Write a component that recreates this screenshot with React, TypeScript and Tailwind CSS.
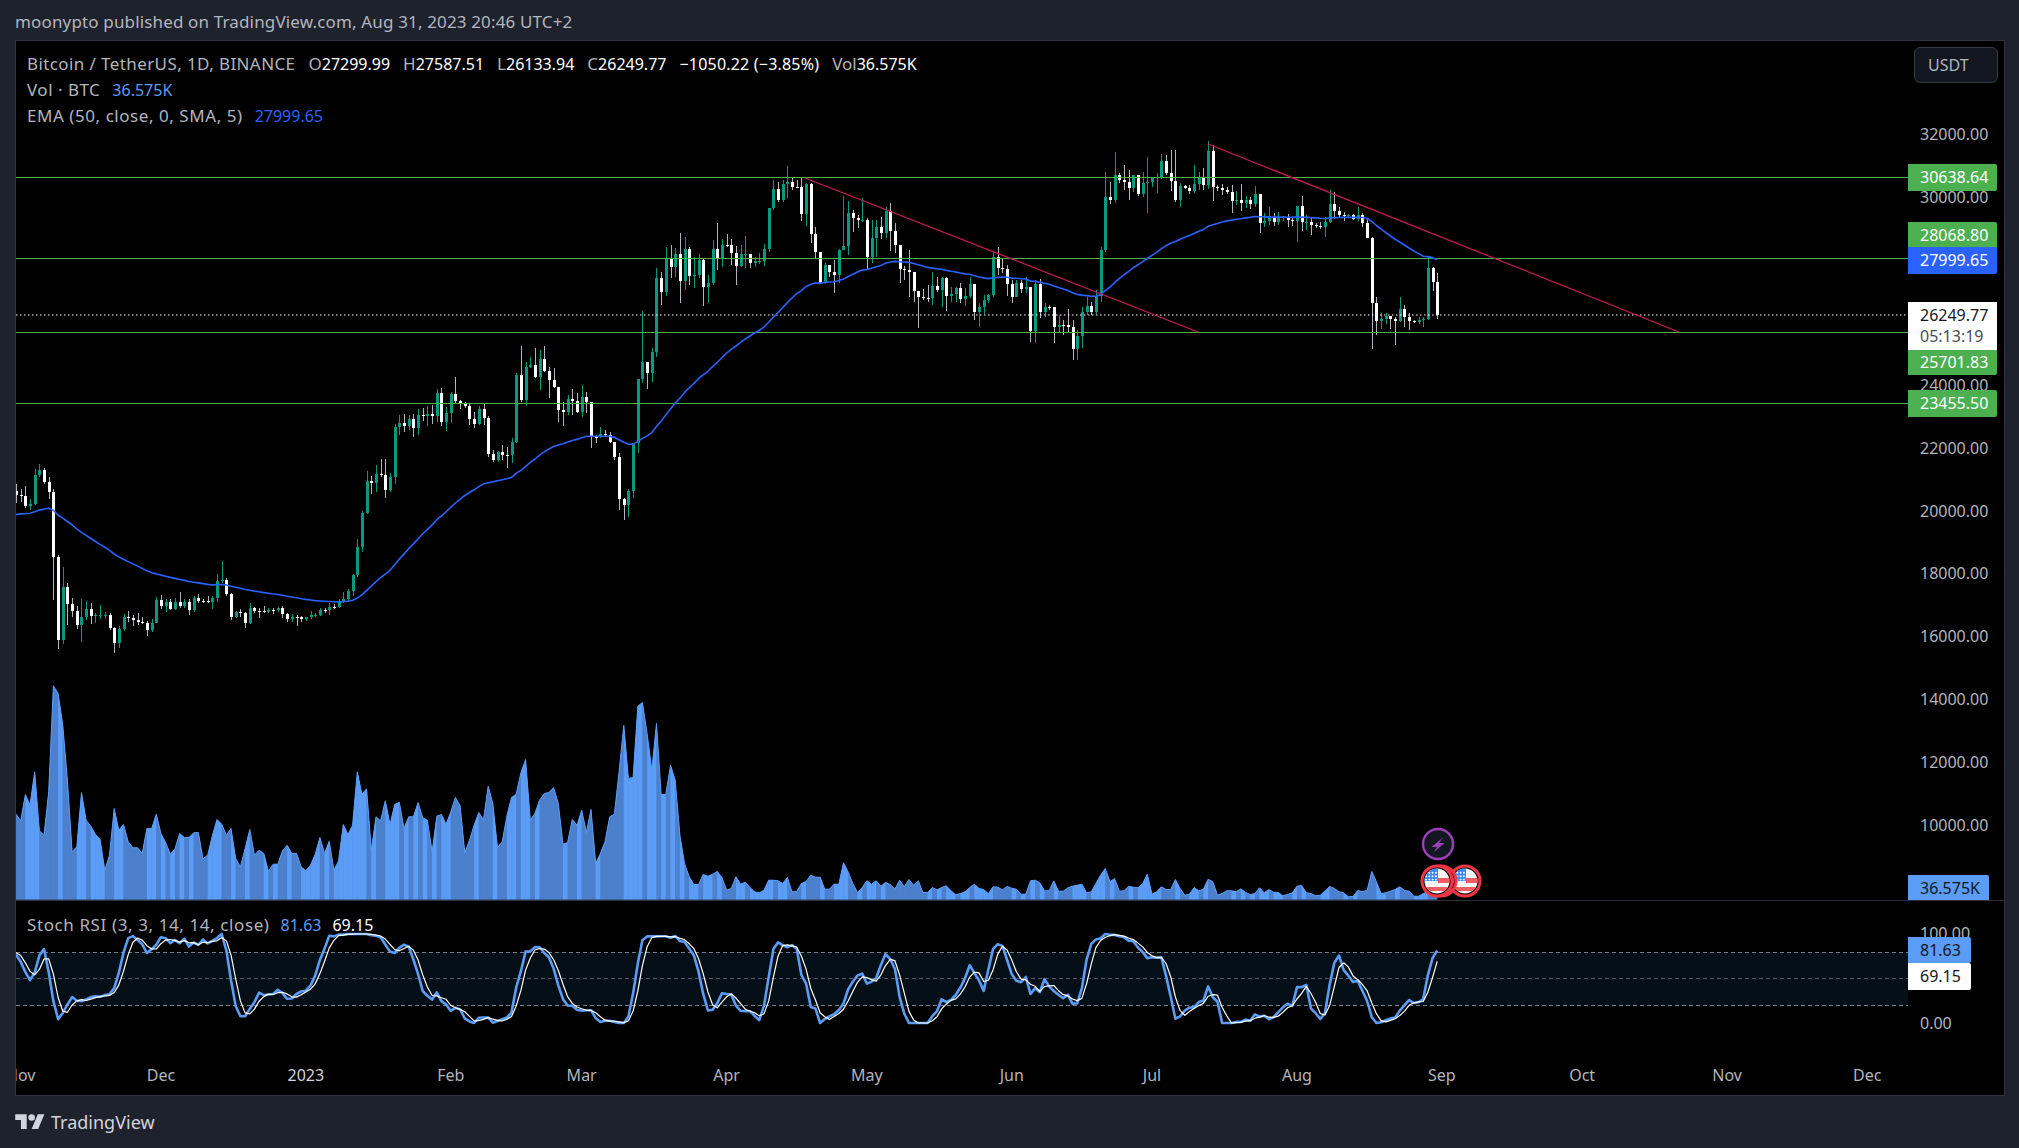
import React from "react";

const pre = [20127,19952,19832,19986,19796,18790,19292,19320,21361,21648,21826,22395,20173,20226,19701,19803,20113,19416,19537,18875,18461,19401,19288,18920,18807,19226,19079,19412,19591,19422,
19312,19056,19629,20337,20158,19955,19531,19417,19439,19131,19060,19155,19375,19176,19068,19262,19549,19327,19123,19041,19164,19204,19570,19329,20080,20771,20295,20591,20818,20635];
const closes = [20490,
20483,20151,20207,21148,21299,20905,20591,18541,15880,17586,17034,16799,16353,16618,16884,16663,16682,16687,16697,16280,15781,16226,16603,16599,16522,16458,16428,16212,16442,17163,
16977,17092,16885,17105,16967,17089,16836,17224,17128,17127,17085,17209,17774,17803,17356,16632,16777,16738,16438,16895,16824,16821,16778,16837,16830,16919,16707,16547,16633,16607,16542,
16616,16672,16674,16850,16831,16950,16943,17127,17178,17440,17944,18846,19930,20954,20871,21185,21134,20677,21071,22667,22783,22707,22917,22632,23060,23009,23074,23022,23743,22827,23125,
23733,23494,23431,23327,22932,22762,23249,22963,21797,21625,21862,21783,21773,22199,24324,23538,24569,24631,24271,24836,24439,24181,23947,23198,23158,23554,23492,23131,
23629,23465,22354,22346,22430,22409,22198,21705,20362,20187,20632,22163,24197,24746,24375,25052,27423,26965,28038,27767,28175,27307,28333,27493,27494,27994,27139,27268,28348,28033,28478,
28473,28199,27811,28169,28175,27907,27948,27961,28333,29653,30235,29884,30399,30485,30318,30315,29445,30397,28822,28245,27262,27816,27591,27510,28300,28422,29473,29340,29248,29268,
28091,28680,29026,28848,29534,28905,28454,27695,27654,27621,26987,26807,26788,26784,27163,27036,27400,26826,26890,27102,26747,26851,27225,26334,26476,26719,26868,28085,27745,27702,27219,
26819,27249,27069,27115,25728,27230,26339,26498,26477,25841,25925,25902,25841,25160,25575,26327,26510,26336,26845,28307,29993,29884,30688,30527,30462,30267,30692,30077,30445,30472,
30585,30617,31156,30767,30514,29895,30346,30292,30171,30414,30620,30380,31454,30312,30289,30231,30145,29856,29913,29792,29908,29771,30081,29176,29228,29354,29212,29314,29352,29275,29230,
29705,29186,29193,29113,29072,29048,29182,29765,29561,29429,29397,29415,29283,29408,29170,28701,26621,26049,26096,26189,26124,26040,26431,26163,26047,26004,26089,26106,27728,27299,26249];

const W1: number[][] = [[132,190],[148,185],[138,205],[178,210],[88,195],[72,110],[85,132],[112,177],[148,480],[345,627],[380,612],[430,555],[473,530],[498,567],[477,605],[483,540],[490,552],[520,550],[495,537],[516,537],[520,570],[560,638],[558,624],[522,572],[513,545],[525,558],[520,555],[530,552],[543,588],[537,575],[472,548],[465,507],[478,516],[478,510],[475,510],[457,505],[478,505],[478,525],[468,517],[462,488],[478,488],[468,488],[468,507],[403,486],[363,430],[415,468],[460,540],[512,535],[508,530],[515,564],[490,552],[500,520],[505,535],[498,520],[505,520],[505,522],[500,516],[497,533],[518,546],[523,545],[525,558],[528,545],[530,544],[513,537],[518,530],[503,529],[505,520],[490,525],[492,506],[478,504],[457,490],[448,482],[403,467],[297,410],[213,335],[93,222],[108,163],[75,157],[57,110],[57,173],[100,155],[-48,132]];
const W2: number[][] = [[695,790],[650,733],[720,748],[725,745],[730,795],[755,805],[738,795],[730,795],[768,890],[870,905],[872,905],[855,900],[860,925],[835,908],[640,850],[558,725],[605,738],[590,625],[565,655],[570,690],[558,635],[620,715],[625,685],[680,785],[725,797],[705,765],[688,765],[700,760],[675,770],[695,760],[725,865],[825,848],[800,835],[810,830],[815,850],[845,900],[880,1050],[1015,1080],[988,1072],[850,1015],[665,880],[452,668],[605,687],[565,665],[325,590],[335,435],[260,408],[255,355],[265,350],[220,430],[232,390],[262,375],[290,385],[283,355],[295,438],[345,430],[240,375],[190,330],[237,320],[222,260],[238,315],[258,375],[255,320],[228,325],[282,325],[290,322],[278,312],[252,318],[145,275],[60,150],[65,125],[60,125],[18,115],[55,90],[60,85],[55,182],[70,198],[70,250],[200,295],[275,370],[310,372],[315,350],[300,398],[268,370],[108,265],[122,285],[150,215],[165,205],[115,185],[175,330],[180,310],[180,290],[172,237],[142,235],[130,272],[190,280],[262,370],[318,360],[270,412],[335,425],[395,505],[388,420],[375,425],[335,435],[350,395],[350,440],[350,452],[380,425],[380,425],[370,430],[385,437],[350,415],[375,480],[430,500],[405,462],[403,430],[275,412],[260,345]];
const W3: number[][] = [[385,430],[405,497],[450,520],[450,500],[450,490],[440,490],[470,635],[450,638],[447,565],[520,560],[525,540],[530,638],[555,610],[570,615],[538,610],[570,690],[600,690],[530,655],[500,555],[515,555],[480,552],[350,515],[125,365],[155,222],[67,220],[130,160],[105,180],[120,210],[138,185],[135,198],[125,200],[82,248],[145,170],[130,188],[72,147],[75,135],[60,183],[60,215],[160,230],[165,178],[165,192],[105,188],[125,180],[115,180],[33,178],[45,212],[165,183],[162,195],[170,193],[165,248],[183,225],[162,242],[197,235],[200,238],[168,232],[195,308],[250,290],[232,285],[250,288],[245,285],[258,272],[252,292],[262,288],[230,335],[198,303],[255,300],[265,315],[280,295],[275,297],[262,322],[180,280],[185,268],[230,265],[245,272],[252,265],[252,270],[232,272],[250,290],[268,325],[320,657],[502,615],[550,597],[550,582],[560,597],[562,645],[502,575],[525,590],[550,600],[570,580],[562,582],[560,590],[380,570],[412,483],[430,567]];

const volA = [432,452,373,405,305,482,495,365,47,70,165,330,545,530,367,450,468,493,508,600,555,415,480,463,515,533,533,550,475,476,432,490,517,552,537,490,502,502,488,487,566,555,497,448,462,495,475,565,590,535,478,555,540,550,603,582,582,542,525,550,550,590,602,585,552,502,550,513,600,572,463,493,465,305,372,356,540,440,452,392,463,403,396,475,440,440,397,443,450,545,438,433,462,425,382,407,548,510,465,427,450,348,400,532,515,437,382,372,308,268,450,430,390,370,367,352,400,522,517,448,465,420,487,418,580,550,515,440,432,305,165,325,322,108,97,190,300,160,373,373,285,330,495,580,620,643,643,613,618,612,604,622,660,655,620,642,636,652,665,668,660,630,630,632,640,622,665,664,640,634,615,621,621,657,657,642,642,578,605,640,667,652,632,642,632,648,637,643,657,630,650,628,645,632,667,667,652,659,652,647,662,674,670,665,652,642,655,658,671,650,651,659,649,654,657,672,672,632,630,638,662,662];
const volB = [122,153,153,143,138,135,132,158,155,130,105,85,125,115,153,152,138,141,143,130,102,162,155,140,148,148,118,145,165,162,142,152,147,117,125,165,160,152,152,155,146,157,163,160,143,158,148,156,157,167,163,158,138,136,158,160,167,165,152,139,145,155,158,170,169,151,154,151,94,125,160,158,153,148,140,151,153,168,168,160,155,165,171];

const X = (i: number) => 16 + 4.675 * i;
const Y = (p: number) => 134 + (32000 - p) * 0.0314;

type Candle = { xc: number; up: boolean; yo: number; yc: number; t: number; b: number };
const candles: Candle[] = closes.map((c, i) => {
  const o = i === 0 ? 20635 : closes[i - 1];
  const yo = Y(o), yc = Y(c);
  let t: number, b: number;
  if (i <= 81) { t = 440 + W1[i][0] / 3; b = 440 + W1[i][1] / 3; }
  else if (i <= 92) { t = Math.min(yo, yc) - 4 - ((i * 7) % 6); b = Math.max(yo, yc) + 4 + ((i * 5) % 7); }
  else if (i <= 210) { t = 160 + W2[i - 93][0] / 3; b = 160 + W2[i - 93][1] / 3; }
  else { t = 130 + W3[i - 211][0] / 3; b = 130 + W3[i - 211][1] / 3; }
  return { xc: Math.round(X(i)), up: c >= o, yo, yc, t, b };
});

// EMA 50
const all = [...pre, ...closes];
const emaRaw: number[] = [];
all.forEach((c, i) => emaRaw.push(i === 0 ? 21300 : emaRaw[i - 1] + (c - emaRaw[i - 1]) * (2 / 51)));
const sma = (a: number[], n: number) =>
  a.map((_, i) => { const s = a.slice(Math.max(0, i - n + 1), i + 1); return s.reduce((x, y) => x + y, 0) / s.length; });
const ema = emaRaw.slice(pre.length);
const emaPts = ema.map((v, i) => `${X(i).toFixed(1)},${Y(v).toFixed(1)}`).join(" ");

// Stoch RSI 3,3,14,14
const rsi: number[] = [];
let ag = 0, al = 0;
all.forEach((c, i) => {
  if (i === 0) { rsi.push(50); return; }
  const d = c - all[i - 1];
  const g = Math.max(d, 0), l = Math.max(-d, 0);
  if (i <= 14) { ag += g / 14; al += l / 14; }
  else { ag = (ag * 13 + g) / 14; al = (al * 13 + l) / 14; }
  rsi.push(al === 0 ? 100 : 100 - 100 / (1 + ag / al));
});
const stoch = rsi.map((r, i) => {
  const s = rsi.slice(Math.max(0, i - 13), i + 1);
  const hi = Math.max(...s), lo = Math.min(...s);
  return hi === lo ? 50 : ((r - lo) / (hi - lo)) * 100;
});
const kAll = sma(stoch, 3);
const dAll = sma(kAll, 3);
const SY = (v: number) => 1023 - 0.89 * v;
const kPts = kAll.slice(pre.length).map((v, i) => `${X(i).toFixed(1)},${SY(v).toFixed(1)}`).join(" ");
const dPts = dAll.slice(pre.length).map((v, i) => `${X(i).toFixed(1)},${SY(v).toFixed(1)}`).join(" ");

// Volume
const BASE = 899.5;
const volY = [...volA.map((y) => BASE - (688 - y) / 3), ...volB.map((y) => BASE - (178 - y) / 3)];
const volTop = volY.map((y, i) => `${X(i).toFixed(1)},${y.toFixed(1)}`).join(" ");
const volArea = `16,${BASE} ${volTop} ${X(volY.length - 1).toFixed(1)},${BASE}`;

function Flag({ cx, cy }: { cx: number; cy: number }) {
  const dots: React.ReactNode[] = [];
  for (let r = 0; r < 3; r++) for (let c = 0; c < 4; c++)
    dots.push(<circle key={`${r}-${c}`} cx={cx - 11 + c * 3.3} cy={cy - 8.2 + r * 3.4} r="0.95" fill="#fff" />);
  return (
    <g>
      <circle cx={cx} cy={cy} r="15" fill="#000" stroke="#f23645" strokeWidth="3" />
      <clipPath id={`fl${cx}`}><circle cx={cx} cy={cy} r="12.5" /></clipPath>
      <g clipPath={`url(#fl${cx})`}>
        <rect x={cx - 13} y={cy - 13} width="26" height="26" fill="#f5f5f5" />
        <rect x={cx + 1} y={cy - 3} width="13" height="5" fill="#f15b62" />
        <rect x={cx - 13} y={cy + 6} width="26" height="4" fill="#f15b62" />
        <rect x={cx - 13} y={cy - 13} width="14" height="13" fill="#3d8bf2" />
        {dots}
      </g>
    </g>
  );
}

const LEVELS = [177, 258, 332, 403];
const AXIS = [
  [32000, 134], [30000, 197], [24000, 385], [22000, 448], [20000, 511], [18000, 573], [16000, 636], [14000, 699], [12000, 762], [10000, 825],
] as const;
const BADGES = [
  ["30638.64", 164, "bg-[#4caf50]"],
  ["28068.80", 222, "bg-[#4caf50]"],
  ["23455.50", 390, "bg-[#4caf50]"],
  ["27999.65", 247, "bg-[#2962ff]"],
] as const;
const TIME: [string, number, boolean][] = [
  ["Nov", 1, false], ["Dec", 31, false], ["2023", 62, true], ["Feb", 93, false], ["Mar", 121, false], ["Apr", 152, false], ["May", 182, false],
  ["Jun", 213, false], ["Jul", 243, false], ["Aug", 274, false], ["Sep", 305, false], ["Oct", 335, false], ["Nov", 366, false], ["Dec", 396, false],
];

export default function App() {
  return (
    <div className="w-[2019px] h-[1148px] flex flex-col bg-[#1e222d] overflow-hidden text-[16px] leading-[26px] text-[#b2b5be] font-['Noto_Sans',sans-serif]">
      <header className="h-[40px] shrink-0 flex items-center pl-[15px] pt-[4px] text-[17px] tracking-[0.15px] text-[#b2b5be]">
        moonypto published on TradingView.com, Aug 31, 2023 20:46 UTC+2
      </header>
      <main className="w-[1990px] ml-[15px] h-[1056px] shrink-0 border border-[#2f3440] bg-black flex flex-col">
        <section className="flex h-[860px] shrink-0 border-b border-[#2a2e39]">
          <div className="relative w-[1892px] h-[859px] overflow-hidden">
            <svg width="1892" height="859" viewBox="16 41 1892 859" className="block">
              <polygon points={volArea} fill="#5088dc" />
              {volY.map((y, i) =>
                i === 0 ? null : (
                  <polygon
                    key={i}
                    points={`${X(i - 1)},${BASE} ${X(i - 1)},${volY[i - 1]} ${X(i)},${y} ${X(i)},${BASE}`}
                    fill={candles[i].up ? "#5b9cf6" : "#4c80cc"}
                  />
                )
              )}
              <polyline points={volTop} fill="none" stroke="#5b9cf6" strokeWidth="1" />
              <g shapeRendering="crispEdges">
                {candles.map((c, i) => (
                  <rect key={i} x={c.xc} y={c.t} width="1" height={c.b - c.t} fill={c.up ? "#089981" : "#b2b5be"} />
                ))}
                {candles.map((c, i) => (
                  <rect
                    key={i}
                    x={c.xc - 1}
                    y={Math.min(c.yo, c.yc)}
                    width="3"
                    height={Math.max(1, Math.abs(c.yo - c.yc))}
                    fill={c.up ? "#089981" : "#ffffff"}
                  />
                ))}
                {LEVELS.map((y) => (
                  <rect key={y} x="16" y={y} width="1892" height="1" fill="#4caf50" />
                ))}
              </g>
              <line x1="16" y1="315" x2="1908" y2="315" stroke="#fff" strokeWidth="1" strokeDasharray="1.5 2.5" />
              <polyline points={emaPts} fill="none" stroke="#2962ff" strokeWidth="1.6" strokeLinejoin="round" />
              <line x1="805" y1="178" x2="1198" y2="332" stroke="#cc1a5c" strokeWidth="1.2" />
              <line x1="1208" y1="144" x2="1679" y2="332" stroke="#cc1a5c" strokeWidth="1.2" />
              <circle cx="1438" cy="844" r="15" fill="#131722" stroke="#9c3fb8" strokeWidth="2.4" />
              <path d="M1443 837.5 L1431.5 847 L1437 847 L1433.5 852.5 L1444.5 843 L1439 843 Z" fill="#9c3fb8" />
              <Flag cx={1465} cy={881} />
              <Flag cx={1441} cy={881} />
              <Flag cx={1437} cy={881} />
            </svg>
            <div className="absolute left-[11px] top-[10px] flex flex-col text-[17px]">
              <div className="flex">
                <span className="tracking-[0.4px]">Bitcoin / TetherUS, 1D, BINANCE</span>
                <span className="ml-[13px]">O<span className="text-white text-[16px]">27299.99</span></span>
                <span className="ml-[13px]">H<span className="text-white text-[16px]">27587.51</span></span>
                <span className="ml-[13px]">L<span className="text-white text-[16px]">26133.94</span></span>
                <span className="ml-[13px]">C<span className="text-white text-[16px]">26249.77</span></span>
                <span className="ml-[13px] text-white text-[16px] tracking-[0.2px]">−1050.22 (−3.85%)</span>
                <span className="ml-[13px]">Vol<span className="text-white text-[16px]">36.575K</span></span>
              </div>
              <div className="flex">
                <span className="tracking-[0.5px]">Vol · BTC</span>
                <span className="ml-[12px] text-[#5b9cf6] text-[16px]">36.575K</span>
              </div>
              <div className="flex">
                <span className="tracking-[0.55px]">EMA (50, close, 0, SMA, 5)</span>
                <span className="ml-[12px] text-[#2962ff] text-[16px]">27999.65</span>
              </div>
            </div>
          </div>
          <div className="relative w-[96px] h-[859px]">
            <div className="absolute right-[6px] top-[6px] w-[84px] h-[36px] rounded-[6px] border border-[#363a45] bg-[#131722] flex items-center pl-[13px] text-[#b2b5be]">
              USDT
            </div>
            {AXIS.map(([p, y]) => (
              <span key={p} className="absolute left-[12px]" style={{ top: y - 41 - 13 }}>{p}.00</span>
            ))}
            {BADGES.map(([t, y, c]) => (
              <span key={t} className={`absolute left-0 w-[89px] h-[27px] leading-[27px] pl-[12px] rounded-r-[2px] text-white ${c}`} style={{ top: y - 41 }}>{t}</span>
            ))}
            <span className="absolute left-0 top-[309px] w-[89px] h-[25px] leading-[24px] pl-[12px] rounded-br-[2px] bg-[#4caf50] text-white">25701.83</span>
            <div className="absolute left-0 top-[261px] w-[89px] h-[48px] pt-[3px] pl-[12px] bg-white flex flex-col leading-[21px]">
              <span className="text-[#131722]">26249.77</span>
              <span className="text-[#4a4d57]">05:13:19</span>
            </div>
            <span className="absolute left-0 top-[834px] w-[81px] h-[25px] pl-[12px] rounded-tr-[2px] bg-[#5b9cf6] text-[#131722]">36.575K</span>
          </div>
        </section>
        <section className="flex h-[155px] shrink-0">
          <div className="relative w-[1892px] h-[155px] overflow-hidden">
            <svg width="1892" height="155" viewBox="16 901 1892 155" className="block">
              <rect x="16" y="952" width="1892" height="53.5" fill="#040f18" />
              <g stroke="#787b86" strokeWidth="1" strokeDasharray="4 3" shapeRendering="crispEdges">
                <line x1="16" y1="952.5" x2="1908" y2="952.5" />
                <line x1="16" y1="978.5" x2="1908" y2="978.5" strokeOpacity="0.7" />
                <line x1="16" y1="1005.5" x2="1908" y2="1005.5" />
              </g>
              <polyline points={kPts} fill="none" stroke="#5b9cf6" strokeWidth="2.6" strokeLinejoin="round" />
              <polyline points={dPts} fill="none" stroke="#ffffff" strokeWidth="1.2" strokeLinejoin="round" />
            </svg>
            <div className="absolute left-[11px] top-[11px] flex text-[17px]">
              <span className="tracking-[0.6px]">Stoch RSI (3, 3, 14, 14, close)</span>
              <span className="ml-[11px] text-[#5b9cf6] text-[16px]">81.63</span>
              <span className="ml-[11px] text-white text-[16px]">69.15</span>
            </div>
          </div>
          <div className="relative w-[96px] h-[155px]">
            <span className="absolute left-[12px] top-[19px]">100.00</span>
            <span className="absolute left-[12px] top-[109px]">0.00</span>
            <span className="absolute left-0 top-[36px] w-[63px] h-[26px] pl-[12px] rounded-r-[2px] bg-[#5b9cf6] text-[#131722]">81.63</span>
            <span className="absolute left-0 top-[62px] w-[63px] h-[27px] pl-[12px] rounded-r-[2px] bg-white text-[#131722]">69.15</span>
          </div>
        </section>
        <section className="relative h-[39px] overflow-hidden">
          {TIME.map(([t, i, bold]) => (
            <span
              key={t + i}
              className={`absolute top-[6px] -translate-x-1/2 ${bold ? "text-[#d1d4dc]" : ""}`}
              style={{ left: X(i) - 16 }}
            >
              {t}
            </span>
          ))}
        </section>
      </main>
      <footer className="flex-1 flex items-center pl-[15px] gap-[6px]">
        <svg width="30" height="23" viewBox="0 0 36 28" fill="#d1d4dc">
          <path d="M14 22H7V11H0V4h14v18zM28 22h-8l7.5-18h8L28 22z" />
          <circle cx="20" cy="8" r="4" />
        </svg>
        <span className="text-[18px] text-[#d1d4dc]">TradingView</span>
      </footer>
    </div>
  );
}
